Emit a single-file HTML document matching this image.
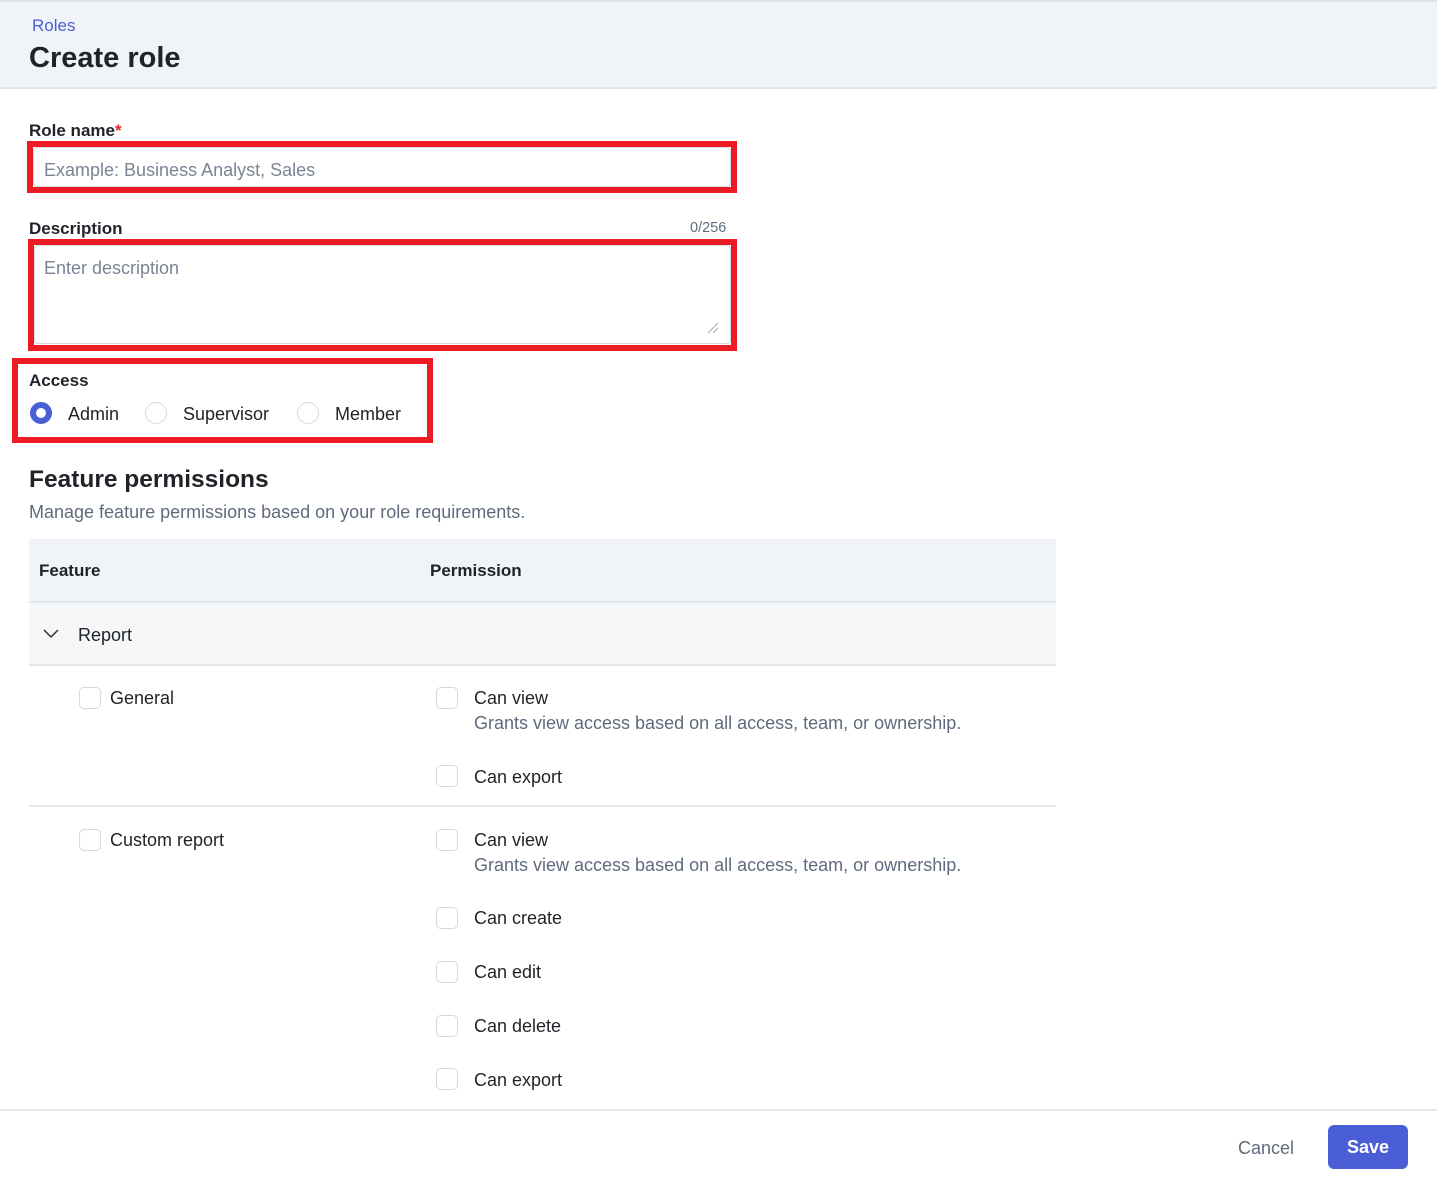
<!DOCTYPE html>
<html><head><meta charset="utf-8"><style>
*{margin:0;padding:0;box-sizing:border-box}
body{width:1437px;height:1184px;position:relative;background:#fff;font-family:"Liberation Sans",sans-serif;color:#1f2328;overflow:hidden}
.a{position:absolute}
.t{position:absolute;line-height:24px;font-size:18px;white-space:nowrap}
.b{font-weight:bold;font-size:17px}
.g{color:#5f6b7d}
.cb{position:absolute;width:22px;height:22px;border:1.5px solid #d5d9df;border-radius:5px;background:#fff}
.rb{position:absolute;width:22px;height:22px;border:1.5px solid #d5d9df;border-radius:50%;background:#fff}
.red{position:absolute;border:6px solid #ec1c24}
.ln{position:absolute;height:2px;background:#e3e6ea}
</style></head><body>
<div class="a" style="left:0;top:0;width:1437px;height:89px;background:#f0f3f8;border-top:2px solid #e1e4e8;border-bottom:2px solid #e1e5ea"></div>
<div class="t" style="left:32px;top:14px;color:#4a5fd6;font-size:17px">Roles</div>
<div class="t" style="left:29px;top:41px;font-size:29px;line-height:34px;font-weight:bold;color:#20242a">Create role</div>

<div class="t b" style="left:29px;top:119px">Role name<span style="color:#e02424">*</span></div>
<div class="a" style="left:33px;top:147px;width:698px;height:40px;border:1px solid #d5d9df;border-radius:4px"></div>
<div class="t" style="left:44px;top:158px;color:#7a8494">Example: Business Analyst, Sales</div>
<div class="red" style="left:27px;top:141px;width:710px;height:52px"></div>

<div class="t b" style="left:29px;top:217px">Description</div>
<div class="t g" style="left:690px;top:216px;font-size:14.5px">0/256</div>
<div class="a" style="left:34px;top:245px;width:697px;height:99px;border:1px solid #d5d9df;border-radius:4px"></div>
<div class="t" style="left:44px;top:256px;color:#7a8494">Enter description</div>
<svg class="a" style="left:706px;top:321px" width="14" height="14"><path d="M2 12L12 2M7 12L12 7" stroke="#aab" stroke-width="1"/></svg>
<div class="red" style="left:28px;top:239px;width:709px;height:112px"></div>

<div class="t b" style="left:29px;top:369px">Access</div>
<div class="a" style="left:30px;top:402px;width:22px;height:22px;border-radius:50%;border:6px solid #4a5fd6;background:#fff"></div>
<div class="t" style="left:68px;top:402px">Admin</div>
<div class="rb" style="left:145px;top:402px"></div>
<div class="t" style="left:183px;top:402px">Supervisor</div>
<div class="rb" style="left:297px;top:402px"></div>
<div class="t" style="left:335px;top:402px">Member</div>
<div class="red" style="left:12px;top:358px;width:421px;height:85px"></div>

<div class="t" style="left:29px;top:465px;font-size:24.5px;line-height:30px;font-weight:bold">Feature permissions</div>
<div class="t g" style="left:29px;top:500px;font-size:18px">Manage feature permissions based on your role requirements.</div>

<div class="a" style="left:29px;top:539px;width:1027px;height:63px;background:#f0f3f8"></div>
<div class="t b" style="left:39px;top:559px">Feature</div>
<div class="t b" style="left:430px;top:559px">Permission</div>
<div class="ln" style="left:29px;top:601px;width:1027px"></div>
<div class="a" style="left:29px;top:603px;width:1027px;height:62px;background:#f6f7f9"></div>
<svg class="a" style="left:43px;top:627px" width="16" height="12"><path d="M1 3L8 10L15 3" fill="none" stroke="#333" stroke-width="1.5"/></svg>
<div class="t" style="left:78px;top:623px">Report</div>
<div class="ln" style="left:29px;top:664px;width:1027px"></div>

<div class="cb" style="left:79px;top:687px"></div>
<div class="t" style="left:110px;top:686px">General</div>
<div class="cb" style="left:436px;top:687px"></div>
<div class="t" style="left:474px;top:686px">Can view</div>
<div class="t g" style="left:474px;top:711px">Grants view access based on all access, team, or ownership.</div>
<div class="cb" style="left:436px;top:765px"></div>
<div class="t" style="left:474px;top:765px">Can export</div>
<div class="ln" style="left:29px;top:805px;width:1027px"></div>

<div class="cb" style="left:79px;top:829px"></div>
<div class="t" style="left:110px;top:828px">Custom report</div>
<div class="cb" style="left:436px;top:829px"></div>
<div class="t" style="left:474px;top:828px">Can view</div>
<div class="t g" style="left:474px;top:853px">Grants view access based on all access, team, or ownership.</div>
<div class="cb" style="left:436px;top:907px"></div>
<div class="t" style="left:474px;top:906px">Can create</div>
<div class="cb" style="left:436px;top:961px"></div>
<div class="t" style="left:474px;top:960px">Can edit</div>
<div class="cb" style="left:436px;top:1015px"></div>
<div class="t" style="left:474px;top:1014px">Can delete</div>
<div class="cb" style="left:436px;top:1068px"></div>
<div class="t" style="left:474px;top:1068px">Can export</div>

<div class="a" style="left:0;top:1109px;width:1437px;height:75px;background:#fff;border-top:2px solid #e3e6ea"></div>
<div class="t g" style="left:1238px;top:1136px;font-size:18px">Cancel</div>
<div class="a" style="left:1328px;top:1125px;width:80px;height:44px;background:#4a5fd6;border-radius:6px;color:#fff;font-weight:bold;font-size:18px;line-height:44px;text-align:center">Save</div>
</body></html>
